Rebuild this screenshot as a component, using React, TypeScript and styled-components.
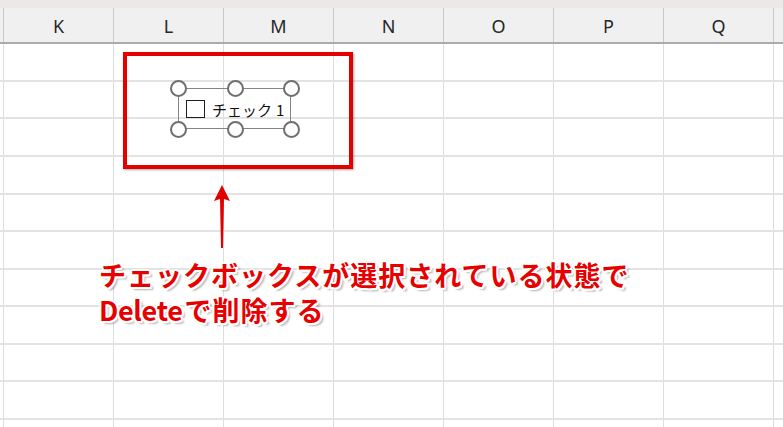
import React from 'react';
import styled, { createGlobalStyle } from 'styled-components';

const GlobalStyle = createGlobalStyle`
  html, body {
    margin: 0;
    padding: 0;
    background: #ffffff;
    overflow: hidden;
  }
`;

const COLUMNS = ['K', 'L', 'M', 'N', 'O', 'P', 'Q'];
const ROW_HEIGHTS = [38, 37, 38, 38, 37, 38, 37, 38, 37, 38, 20];
const GRID_COLUMNS = `4px repeat(${COLUMNS.length}, 110px) 1fr`;

const Sheet = styled.div`
  position: relative;
  width: 783px;
  height: 427px;
  overflow: hidden;
  background: #ffffff;
  font-family: 'Noto Sans', 'Liberation Sans', sans-serif;
`;

const TitleStrip = styled.div`
  height: 8px;
  background: #ece8e6;
`;

const HeaderRow = styled.div`
  display: grid;
  grid-template-columns: ${GRID_COLUMNS};
  height: 34px;
  background: #f0f0f0;
  border-bottom: 2px solid #ababab;
`;

const ColHead = styled.div<{ last?: boolean }>`
  display: flex;
  align-items: center;
  justify-content: center;
  border-right: ${({ last }) => (last ? 'none' : '1px solid #c9c9c9')};
  font-size: 18px;
  color: #262626;
  padding-top: 2px;
`;

const BodyRow = styled.div<{ h: number }>`
  display: grid;
  grid-template-columns: ${GRID_COLUMNS};
  height: ${({ h }) => h}px;
  box-sizing: border-box;
  border-bottom: 2px solid #e3e3e3;
`;

const Cell = styled.div<{ last?: boolean }>`
  border-right: ${({ last }) => (last ? 'none' : '1px solid #dddddd')};
`;

const Highlight = styled.div`
  position: absolute;
  left: 123px;
  top: 52px;
  width: 230px;
  height: 117px;
  box-sizing: border-box;
  border: 4px solid #e50000;
  box-shadow: 1px 1px 2px rgba(0, 0, 0, 0.35);
`;

const Control = styled.div`
  position: absolute;
  left: 178px;
  top: 88px;
  width: 113px;
  height: 41px;
  box-sizing: border-box;
  border: 1.5px solid #858585;
  display: flex;
  align-items: center;
  padding-left: 7px;
  gap: 7px;
`;

const Box = styled.div`
  width: 19px;
  height: 18px;
  box-sizing: border-box;
  border: 1.5px solid #1e1e1e;
  background: #ffffff;
`;

const Caption = styled.span`
  display: flex;
  gap: 4px;
  font-family: 'Noto Sans CJK JP', 'Noto Sans', sans-serif;
  font-size: 15px;
  color: #111111;
  padding-top: 1px;
`;

const Handle = styled.div<{ x: number; y: number }>`
  position: absolute;
  left: ${({ x }) => x - 8.5}px;
  top: ${({ y }) => y - 8.5}px;
  width: 17px;
  height: 17px;
  box-sizing: border-box;
  border-radius: 50%;
  border: 2.5px solid #6f6f6f;
  background: #ffffff;
`;

const Arrow = styled.svg`
  position: absolute;
  left: 212px;
  top: 183px;
`;

const Callout = styled.div`
  position: absolute;
  left: 99px;
  top: 257px;
  display: flex;
  flex-direction: column;
  font-family: 'Noto Sans CJK JP', 'Noto Sans', sans-serif;
  font-weight: 700;
  font-size: 27px;
  letter-spacing: 1px;
  color: #e60000;
  white-space: nowrap;
  text-shadow:
    -2px 0 0 #fff, 2px 0 0 #fff, 0 -2px 0 #fff, 0 2px 0 #fff,
    -1.5px -1.5px 0 #fff, 1.5px -1.5px 0 #fff, -1.5px 1.5px 0 #fff, 1.5px 1.5px 0 #fff,
    3px 3px 2px rgba(0, 0, 0, 0.3);
`;

const CalloutLine = styled.div`
  height: 35px;
  line-height: 35px;
`;

const Latin = styled.span`
  letter-spacing: -0.3px;
  margin-right: 2px;
`;

const handles = [
  { x: 178, y: 88 },
  { x: 235, y: 88 },
  { x: 291, y: 88 },
  { x: 178, y: 129 },
  { x: 235, y: 129 },
  { x: 291, y: 129 },
];

export default function App(): JSX.Element {
  return (
    <>
      <GlobalStyle />
      <Sheet>
        <TitleStrip />
        <HeaderRow>
          <ColHead />
          {COLUMNS.map((c) => (
            <ColHead key={c}>{c}</ColHead>
          ))}
          <ColHead last />
        </HeaderRow>
        {ROW_HEIGHTS.map((h, i) => (
          <BodyRow key={i} h={h}>
            <Cell />
            {COLUMNS.map((c) => (
              <Cell key={c} />
            ))}
            <Cell last />
          </BodyRow>
        ))}

        <Highlight />
        <Control>
          <Box />
          <Caption>
            <span>チェック</span>
            <span>1</span>
          </Caption>
        </Control>
        {handles.map((p) => (
          <Handle key={`${p.x}-${p.y}`} x={p.x} y={p.y} />
        ))}

        <Arrow width="20" height="68" viewBox="0 0 20 68">
          <path d="M10 2 L18 18 L12 16 L11 65 L9 65 L8 16 L2 18 Z" fill="#e00000" />
        </Arrow>

        <Callout>
          <CalloutLine>チェックボックスが選択されている状態で</CalloutLine>
          <CalloutLine>
            <Latin>Delete</Latin>で削除する
          </CalloutLine>
        </Callout>
      </Sheet>
    </>
  );
}
